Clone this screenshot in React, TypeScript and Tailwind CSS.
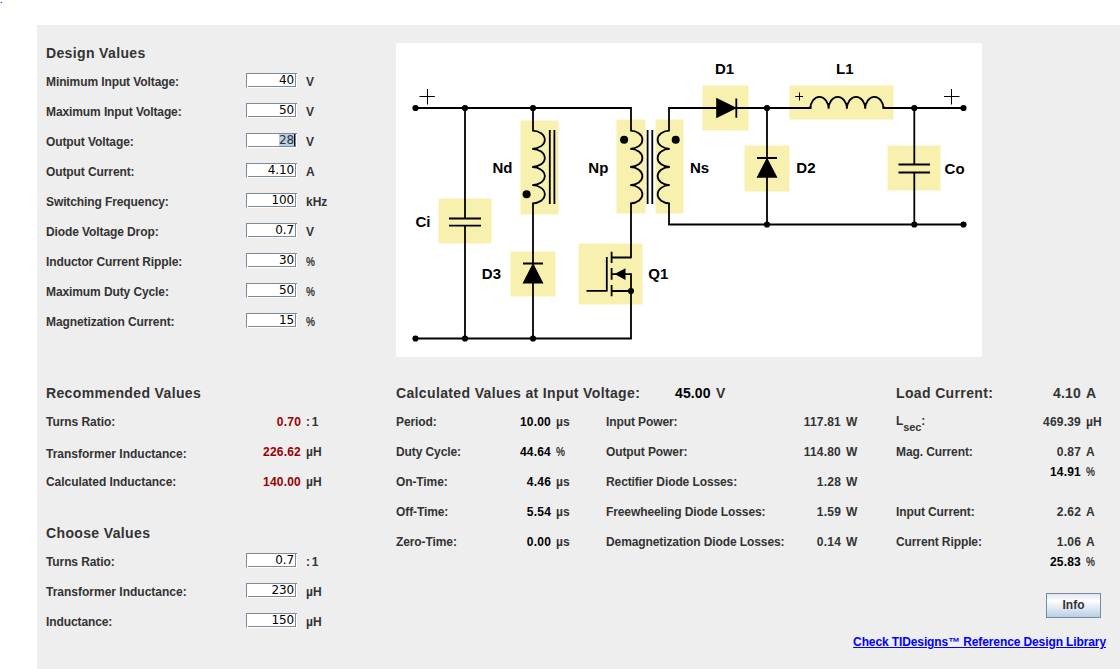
import React from "react";

type LineProps = {
  label: React.ReactNode;
  value?: string;
  unit?: string;
  strong?: boolean;
};

function Heading({ children }: { children: React.ReactNode }) {
  return (
    <h2 className="text-[14px] leading-[20px] font-bold tracking-[0.36px] whitespace-nowrap">{children}</h2>
  );
}

function Unit({ children }: { children?: string }) {
  if (children === "%") {
    return <span className="inline-block origin-left scale-x-[0.84]">%</span>;
  }
  if (children === ": 1") {
    return <span className="[word-spacing:-1.5px]">: 1</span>;
  }
  return <>{children}</>;
}

function FieldRow({ label, value, unit, selected }: { label: React.ReactNode; value: string; unit: string; selected?: boolean }) {
  return (
    <div className="flex h-[30px] items-center whitespace-nowrap">
      <span className="w-[200px] tracking-[-0.1px]">{label}</span>
      <span className="mb-[3px] flex h-[15px] w-[51px] items-stretch border-t border-l border-[#7a8a99] border-b border-b-white bg-white">
        <span className="ml-px flex flex-1 items-center justify-end border-r border-b border-[#7a8a99] font-['DejaVu_Sans',sans-serif] text-[12px] leading-[12px] font-normal tracking-[-0.1px] text-black">
          {selected ? <span className="border-r border-black bg-[#b8cfe5] text-[#333]">{value}</span> : <span className="pr-px">{value}</span>}
        </span>
        <span className="w-px bg-white" />
      </span>
      <span className="ml-[9px]"><Unit>{unit}</Unit></span>
    </div>
  );
}

function Reading({ label, value, unit, strong }: LineProps) {
  return (
    <div className="flex h-[30px] items-center whitespace-nowrap">
      <span className="flex-1 tracking-[-0.1px]">{label}</span>
      <span className={strong ? "tracking-[0.2px] text-black" : "tracking-[0.2px]"}>{value}</span>
      <span className="ml-[5px] w-[20px]"><Unit>{unit}</Unit></span>
    </div>
  );
}

function Percent({ value }: { value: string }) {
  return (
    <div className="-mt-[5px] flex h-[20px] items-center justify-end">
      <span className="tracking-[0.2px] text-black">{value}</span>
      <span className="ml-[5px] w-[20px]"><Unit>%</Unit></span>
    </div>
  );
}

const blocks = [
  [520.5, 120.5, 38, 94], [438.5, 198.5, 53, 45], [510.5, 251.5, 45, 45],
  [616.5, 119.5, 29, 94], [655.5, 119.5, 28, 94], [702.5, 85.5, 46, 45],
  [744.5, 145.5, 45, 46], [789.5, 85.5, 104, 34], [887.5, 145.5, 53, 45],
  [578.5, 243.5, 64, 61],
];

const joints = [
  [415.5, 108], [465, 108], [533, 108], [767, 108], [914.3, 108], [963.5, 108],
  [767, 224.5], [914.3, 224.5], [963.5, 224.5], [415.5, 338.5], [465, 338.5],
  [533, 338.5], [631, 291],
];

const labels: [string, number, number][] = [
  ["D1", 715, 74], ["L1", 836, 74], ["Nd", 492.5, 173], ["Np", 588.3, 172.5],
  ["Ns", 690, 172.5], ["D2", 796.3, 173], ["Co", 944.6, 173.5], ["Ci", 415.5, 227],
  ["D3", 481.8, 278.5], ["Q1", 648.3, 278.5],
];

function Schematic() {
  return (
    <svg viewBox="396 43 586 314" className="block h-[314px] w-[586px] bg-white">
      <g fill="#f8f0af">
        {blocks.map(([x, y, w, h]) => (
          <rect key={`${x}-${y}`} x={x} y={y} width={w} height={h} />
        ))}
      </g>
      <g fill="none" stroke="#000" strokeWidth="1.8">
        <path d="M415.5 108H631V130.5M465 108V218.5M465 226V338.5M533 108V130.5M533 203.3V338.5M631 203.3V258.2M631 273.2V338.5H415.5" />
        <path d="M669 130.5V108H810.5V106M883.5 106V108H963.5M669 203.3V224.5H963.5M767 108V224.5M914.3 108V164.5M914.3 172.5V224.5" />
        <path d="M449 218.5H481M449 225.7H481M523 263.5H543M757 158H777M736.3 98.5V117.7M898.5 164.5H930M898.5 172.5H930" />
        <path d="M532.2 130.6a12.6 9.1 0 0 1 0 18.2a12.6 9.1 0 0 1 0 18.2a12.6 9.1 0 0 1 0 18.2a12.6 9.1 0 0 1 0 18.2" />
        <path d="M630.2 130.6a12.2 9.1 0 0 1 0 18.2a12.2 9.1 0 0 1 0 18.2a12.2 9.1 0 0 1 0 18.2a12.2 9.1 0 0 1 0 18.2" />
        <path d="M669.8 130.6a12.2 9.1 0 0 0 0 18.2a12.2 9.1 0 0 0 0 18.2a12.2 9.1 0 0 0 0 18.2a12.2 9.1 0 0 0 0 18.2" />
        <path d="M810.3 108.8a9.1 11.9 0 0 1 18.3 0a9.1 11.9 0 0 1 18.3 0a9.1 11.9 0 0 1 18.3 0a9.1 11.9 0 0 1 18.3 0" />
        <path d="M549.8 130V204M554.4 130V204M647.6 130V204M652.3 130V204" />
        <path d="M586.5 290.8H606.8M606.8 257V291.5M611.6 251.7V263M611.6 268V279.8M611.6 285V296.2M611.6 257.5H631M611.6 274.2H631M611.6 291H631" />
      </g>
      <path d="M419.5 96.5H434.8M427.5 89V104.5M944 96.5H959.5M951.5 89V104.5M795.3 96.5H803M799.5 92.5V100.5" stroke="#000" strokeWidth="1" />
      <path d="M522.5 283.5L533 263L543.5 283.5ZM756.5 177.7L767 157.5L777.5 177.7ZM716.2 97.7L737 108L716.2 118.3ZM614.5 274L625.5 268.3V280Z" />
      {joints.map(([x, y]) => (
        <circle key={`${x}-${y}`} cx={x} cy={y} r="3.1" />
      ))}
      <circle cx="526.6" cy="194.3" r="4" />
      <circle cx="624.1" cy="139.8" r="4" />
      <circle cx="675.7" cy="139.8" r="4" />
      <g className="text-[15px] font-bold">
        {labels.map(([t, x, y]) => (
          <text key={t} x={x} y={y}>{t}</text>
        ))}
      </g>
    </svg>
  );
}

function Recommended({ label, value, unit }: LineProps) {
  return (
    <div className="flex h-[30px] items-center whitespace-nowrap">
      <span className="w-[140px] tracking-[-0.05px]">{label}</span>
      <span className="w-[115px] text-right tracking-[0.2px] text-[#990000]">{value}</span>
      <span className="ml-[5px]"><Unit>{unit}</Unit></span>
    </div>
  );
}

export default function App() {
  return (
    <div className="flex h-[669px] w-[1120px] flex-col overflow-hidden bg-white font-['Liberation_Sans',Arial,sans-serif] text-[12px] font-bold text-[#333]">
      <div className="h-[25px]">
        <a className="block text-[8px] leading-[1px] font-bold text-[#0000ee]">.</a>
      </div>
      <div className="ml-[37px] flex flex-1 flex-col bg-[#eeeeee] pl-[9px]">
        <div className="flex h-[358px] pt-[18px]">
          <section className="w-[350px]">
            <Heading>Design Values</Heading>
            <div className="pt-[4px]">
              <FieldRow label="Minimum Input Voltage:" value="40" unit="V" />
              <FieldRow label="Maximum Input Voltage:" value="50" unit="V" />
              <FieldRow label="Output Voltage:" value="28" unit="V" selected />
              <FieldRow label="Output Current:" value="4.10" unit="A" />
              <FieldRow label="Switching Frequency:" value="100" unit="kHz" />
              <FieldRow label="Diode Voltage Drop:" value="0.7" unit="V" />
              <FieldRow label="Inductor Current Ripple:" value="30" unit="%" />
              <FieldRow label="Maximum Duty Cycle:" value="50" unit="%" />
              <FieldRow label="Magnetization Current:" value="15" unit="%" />
            </div>
          </section>
          <Schematic />
        </div>
        <div className="flex">
          <div className="w-[350px]">
            <section className="h-[140px]">
              <Heading>Recommended Values</Heading>
              <div className="pt-[4px]">
                <Recommended label="Turns Ratio:" value="0.70" unit=": 1" />
                <Recommended label={<span className="block pt-[3px] tracking-normal">Transformer Inductance:</span>} value="226.62" unit="µH" />
                <Recommended label="Calculated Inductance:" value="140.00" unit="µH" />
              </div>
            </section>
            <section>
              <Heading>Choose Values</Heading>
              <div className="pt-[4px]">
                <FieldRow label="Turns Ratio:" value="0.7" unit=": 1" />
                <FieldRow label={<span className="tracking-normal">Transformer Inductance:</span>} value="230" unit="µH" />
                <FieldRow label="Inductance:" value="150" unit="µH" />
              </div>
            </section>
          </div>
          <div className="w-[500px]">
            <div className="flex text-[14px]">
              <Heading>Calculated Values at Input Voltage:</Heading>
              <span className="ml-auto flex w-[221px] leading-[20px]">
                <span className="w-[36px] tracking-[0.1px] text-black">45.00</span>
                <span className="ml-[5px]">V</span>
              </span>
            </div>
            <div className="flex pt-[4px]">
              <div className="w-[180px]">
                <Reading label="Period:" value="10.00" unit="µs" strong />
                <Reading label="Duty Cycle:" value="44.64" unit="%" strong />
                <Reading label="On-Time:" value="4.46" unit="µs" strong />
                <Reading label="Off-Time:" value="5.54" unit="µs" strong />
                <Reading label="Zero-Time:" value="0.00" unit="µs" strong />
              </div>
              <div className="ml-[30px] w-[260px]">
                <Reading label="Input Power:" value="117.81" unit="W" />
                <Reading label="Output Power:" value="114.80" unit="W" />
                <Reading label="Rectifier Diode Losses:" value="1.28" unit="W" />
                <Reading label="Freewheeling Diode Losses:" value="1.59" unit="W" />
                <Reading label="Demagnetization Diode Losses:" value="0.14" unit="W" />
              </div>
            </div>
          </div>
          <div className="w-[210px]">
            <div className="flex text-[14px] leading-[20px]">
              <Heading>Load Current:</Heading>
              <span className="ml-auto tracking-[0.2px]">4.10</span>
              <span className="ml-[5px] w-[20px]">A</span>
            </div>
            <div className="pt-[4px]">
              <Reading
                label={<span className="block pb-[2px]">L<span className="relative top-[6px] text-[11px] leading-none">sec</span>:</span>}
                value="469.39"
                unit="µH"
              />
              <Reading label="Mag. Current:" value="0.87" unit="A" />
              <Percent value="14.91" />
              <div className="pt-[15px]">
                <Reading label="Input Current:" value="2.62" unit="A" />
                <Reading label="Current Ripple:" value="1.06" unit="A" />
              </div>
              <Percent value="25.83" />
            </div>
            <div className="flex flex-col items-end pt-[21px]">
              <button className="mr-[5px] h-[25px] w-[55px] border border-[#7a8a99] bg-linear-to-b from-[#dde8f3] via-white via-30% to-[#b8cfe5] leading-[23px] font-bold">
                Info
              </button>
              <a className="mt-[16px] leading-[16px] tracking-[-0.11px] whitespace-nowrap text-[#0000ff] underline">
                Check TIDesigns™ Reference Design Library
              </a>
            </div>
          </div>
        </div>
      </div>
    </div>
  );
}
